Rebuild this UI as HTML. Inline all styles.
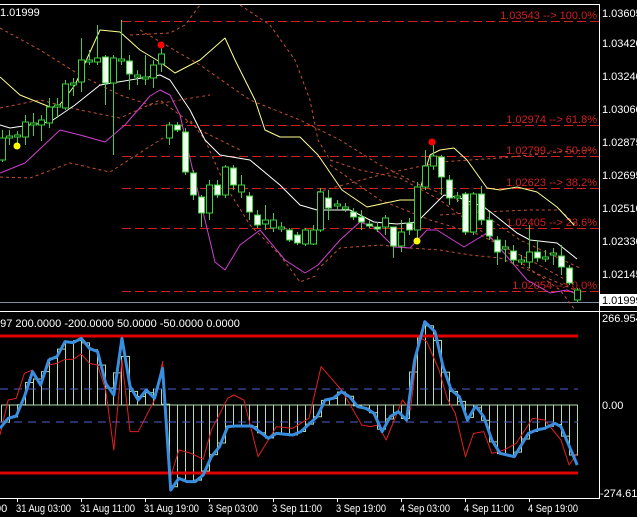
<!DOCTYPE html>
<html><head><meta charset="utf-8"><style>
html,body{margin:0;padding:0;background:#000;width:637px;height:517px;overflow:hidden}
svg{display:block}
text{font-family:"Liberation Sans",sans-serif;font-size:11px}
</style></head><body>
<svg id="s" width="637" height="517" viewBox="0 0 637 517" xmlns="http://www.w3.org/2000/svg">
<rect width="637" height="517" fill="#000"/>
<line x1="0" y1="4.5" x2="600" y2="4.5" stroke="#fff"/>
<line x1="599.5" y1="4" x2="599.5" y2="312" stroke="#fff"/>
<line x1="0" y1="302.5" x2="599" y2="302.5" stroke="#8090a0"/>
<line x1="0" y1="311.5" x2="637" y2="311.5" stroke="#fff"/>
<line x1="599.5" y1="312" x2="599.5" y2="499" stroke="#fff"/>
<line x1="0" y1="498.5" x2="600" y2="498.5" stroke="#fff"/>
<g id="fib" stroke="#d02020" stroke-dasharray="9,4" stroke-width="1"></g>
<g fill="#d02020" text-anchor="end" font-size="10">
<text x="597" y="19">1.03543 --&gt; 100.0%</text>
<text x="597" y="123">1.02974 --&gt; 61.8%</text>
<text x="597" y="154">1.02799 --&gt; 50.0%</text>
<text x="597" y="186">1.02623 --&gt; 38.2%</text>
<text x="597" y="226">1.02405 --&gt; 23.6%</text>
<text x="597" y="289">1.02054 --&gt; 0.0%</text>
</g>
<g id="dash" fill="none" stroke="#c05030" stroke-dasharray="3,3" stroke-width="1"></g>
<g id="lines" fill="none"></g>
<g id="candles"></g>
<circle cx="17" cy="146" r="3.5" fill="#ffff00"/>
<circle cx="417" cy="241" r="3.5" fill="#ffff00"/>
<circle cx="161" cy="45" r="3.5" fill="#ff0000"/>
<circle cx="432" cy="142" r="3.5" fill="#ff0000"/>
<text x="0" y="16" fill="#fff">1.01999</text>
<text x="-3" y="26" fill="#fff">)</text>
<g fill="#fff" font-size="10">
<text x="602" y="17">1.03605</text>
<text x="602" y="47">1.03420</text>
<text x="602" y="80">1.03240</text>
<text x="602" y="113">1.03060</text>
<text x="602" y="146">1.02875</text>
<text x="602" y="179">1.02695</text>
<text x="602" y="212">1.02510</text>
<text x="602" y="245">1.02330</text>
<text x="602" y="278">1.02145</text>
</g>
<rect x="600" y="294" width="37" height="12" fill="#fff"/>
<text x="602" y="304" fill="#000" font-size="10">1.01999</text>
<g id="hist" fill="none" stroke="#b0dcb0" stroke-width="1"></g>
<line x1="0" y1="336" x2="578" y2="336" stroke="#e00000" stroke-width="3"/>
<line x1="0" y1="473" x2="578" y2="473" stroke="#e00000" stroke-width="3"/>
<line x1="0" y1="389" x2="578" y2="389" stroke="#5060d0" stroke-dasharray="8,6"/>
<line x1="0" y1="422" x2="578" y2="422" stroke="#5060d0" stroke-dasharray="8,6"/>
<g id="ind" fill="none"></g>
<text x="-6" y="327" fill="#fff" font-size="10">597 200.0000 -200.0000 50.0000 -50.0000 0.0000</text>
<g fill="#fff" font-size="10">
<text x="602" y="322">266.954</text>
<text x="602" y="409">0.00</text>
<text x="600" y="497">-274.618</text>
</g>
<g fill="#fff" font-size="10" id="tl">
<text x="-5" y="512">00</text>
<text x="16" y="512" textLength="55" lengthAdjust="spacingAndGlyphs">31 Aug 03:00</text>
<text x="80" y="512" textLength="55" lengthAdjust="spacingAndGlyphs">31 Aug 11:00</text>
<text x="144" y="512" textLength="55" lengthAdjust="spacingAndGlyphs">31 Aug 19:00</text>
<text x="208" y="512" textLength="50" lengthAdjust="spacingAndGlyphs">3 Sep 03:00</text>
<text x="272" y="512" textLength="50" lengthAdjust="spacingAndGlyphs">3 Sep 11:00</text>
<text x="336" y="512" textLength="50" lengthAdjust="spacingAndGlyphs">3 Sep 19:00</text>
<text x="400" y="512" textLength="50" lengthAdjust="spacingAndGlyphs">4 Sep 03:00</text>
<text x="464" y="512" textLength="50" lengthAdjust="spacingAndGlyphs">4 Sep 11:00</text>
<text x="528" y="512" textLength="50" lengthAdjust="spacingAndGlyphs">4 Sep 19:00</text>
</g>
<g id="ticks" stroke="#fff"></g>
</svg>
<script>
var NS="http://www.w3.org/2000/svg";
function el(p,t,a){var e=document.createElementNS(NS,t);for(var k in a)e.setAttribute(k,a[k]);document.getElementById(p).appendChild(e);return e;}
[[21,122],[125,122],[156,122],[188,122],[228,122],[291,122]].forEach(function(f){el("fib","line",{x1:f[1],y1:f[0]+.5,x2:599,y2:f[0]+.5});});
function pl(p,pts,st,w){el(p,"polyline",{points:pts.map(function(q){return q.join(",")}).join(" "),stroke:st,"stroke-width":w||1,"stroke-linejoin":"round"});}
pl("dash",[[0,28],[40,50],[80,75],[120,95],[150,105],[180,100],[210,95]]);
pl("dash",[[130,35],[170,33],[185,25],[200,5]]);
pl("dash",[[240,5],[270,25],[295,60],[310,100],[318,140],[330,160],[360,170],[400,178],[440,200],[480,230],[520,262],[560,290],[575,310]]);
pl("dash",[[140,30],[200,65],[250,100],[300,120],[340,140],[380,165],[420,185],[470,205],[520,240],[580,268]]);
pl("dash",[[0,108],[40,100],[80,110],[120,118],[160,100],[200,130],[240,150]]);
pl("dash",[[0,177],[30,178],[70,163],[110,172],[160,140],[190,120],[205,140],[225,185],[250,225],[280,255],[300,282],[318,275]]);
pl("dash",[[317,270],[340,248],[380,245],[410,248],[440,250],[470,255],[500,258],[540,275],[575,290]]);
pl("dash",[[317,192],[380,175],[440,162],[500,158],[560,152],[590,150]]);
pl("dash",[[330,165],[380,200],[430,220],[480,235],[530,260],[575,285]]);
pl("dash",[[440,215],[480,212],[530,210],[560,210],[577,226]]);
pl("lines",[[0,77],[20,95],[50,107],[58,107],[75,85],[100,30],[120,32],[140,50],[160,62],[175,73],[200,60],[225,38],[235,60],[255,100],[265,130],[280,137],[300,137],[318,155],[342,190],[367,207],[400,200],[417,200],[430,155],[440,150],[454,148],[467,160],[487,188],[500,190],[517,187],[537,192],[557,207],[574,225]],"#ffff90");
pl("lines",[[0,125],[10,128],[50,122],[75,105],[100,85],[130,80],[160,75],[170,80],[190,110],[205,140],[220,155],[250,160],[280,185],[300,205],[317,210],[350,210],[374,222],[397,224],[417,222],[444,195],[457,197],[484,207],[497,217],[517,233],[530,240],[557,243],[577,259]],"#ffffff");
pl("lines",[[0,173],[25,163],[60,130],[80,135],[105,142],[125,125],[150,96],[160,90],[170,95],[180,115],[195,180],[205,220],[215,262],[225,270],[240,245],[260,230],[285,260],[305,273],[318,265],[340,240],[360,222],[374,227],[394,247],[410,248],[427,230],[437,230],[464,247],[487,233],[504,253],[527,280],[550,293],[567,290],[574,293]],"#d040d0");
var C=[[2,138,160,130,162,0],[9,136,138,130,145,0],[17,135,137,131,145,0],[25,122,137,115,145,0],[33,123,125,113,136,0],[41,120,125,115,141,0],[49,107,123,98,128,0],[57,105,107,98,118,0],[65,84,108,80,110,0],[73,83,85,78,96,0],[81,60,82,38,92,0],[89,60,62,50,65,0],[97,58,62,25,65,0],[105,57,83,55,105,1],[113,58,83,55,155,0],[121,59,61,20,65,0],[129,61,74,55,90,1],[137,75,77,70,85,0],[145,77,79,55,85,0],[153,65,78,60,88,0],[161,54,64,48,72,0],[169,125,138,122,145,0],[177,125,130,122,132,1],[185,132,172,128,175,1],[193,173,195,170,200,1],[201,197,213,195,227,1],[209,185,213,180,220,0],[217,185,195,180,198,1],[225,167,195,165,198,0],[233,168,185,165,190,1],[241,185,192,175,198,0],[249,196,212,192,220,1],[257,215,225,210,228,1],[265,220,224,205,230,0],[273,220,228,213,232,0],[281,227,229,222,232,0],[289,230,240,228,242,1],[297,235,243,232,245,1],[305,230,244,228,246,0],[313,230,244,225,245,0],[320,192,230,188,232,0],[328,198,208,190,220,1],[337,204,206,200,210,0],[345,207,209,203,212,0],[353,212,217,208,220,1],[361,217,222,210,230,1],[369,224,226,220,228,1],[377,227,229,222,232,1],[385,218,227,215,235,0],[393,227,246,228,258,1],[401,232,246,220,252,0],[409,223,230,218,235,1],[417,223,225,212,234,0],[417,187,230,182,238,0],[425,166,187,150,190,0],[433,156,166,143,170,0],[441,157,177,155,195,1],[449,180,198,175,205,1],[457,196,198,192,202,0],[465,194,232,192,235,1],[473,194,232,192,235,0],[481,194,220,186,225,1],[489,220,236,212,240,1],[497,240,252,236,265,1],[505,247,249,240,262,0],[513,251,260,245,265,1],[521,260,262,255,265,0],[529,252,262,225,268,0],[537,252,258,240,262,1],[545,257,259,250,262,0],[553,253,255,248,265,0],[561,256,267,245,275,1],[569,268,283,265,285,1],[577,290,300,288,302,0]];
C.forEach(function(c){el("candles","line",{x1:c[0]+.5,y1:c[3],x2:c[0]+.5,y2:c[4],stroke:"#40d040"});
el("candles","rect",{x:c[0]-2.5,y:c[1],width:6,height:Math.max(1,c[2]-c[1]),fill:c[5]?"#f0fff0":"#000",stroke:"#40d040"});});
function cv(a){return a.map(function(q){return [q[0]/2.46,q[1]/3+300]});}
var B=cv([[0,385],[20,355],[40,348],[60,290],[80,215],[100,255],[120,180],[140,170],[160,125],[180,128],[200,115],[220,145],[240,155],[260,250],[280,285],[300,115],[320,260],[340,300],[360,270],[380,295],[400,205],[420,570],[440,535],[460,545],[480,545],[500,525],[520,470],[540,440],[560,380],[580,378],[620,378],[660,415],[680,400],[720,405],[740,395],[780,350],[800,300],[820,295],[840,275],[860,290],[880,320],[900,325],[920,340],[940,395],[960,350],[980,335],[1000,360],[1020,180],[1045,65],[1070,95],[1090,200],[1110,270],[1130,290],[1150,360],[1170,318],[1190,350],[1210,420],[1230,460],[1265,470],[1300,400],[1320,390],[1340,385],[1365,370],[1380,380],[1420,495]]);
var R=cv([[0,405],[20,300],[40,295],[60,220],[80,210],[100,250],[120,195],[140,190],[160,178],[180,178],[200,162],[220,190],[240,195],[260,270],[280,450],[300,180],[320,395],[340,395],[380,300],[400,185],[420,530],[440,450],[470,460],[500,478],[520,390],[560,295],[575,285],[600,300],[635,470],[660,420],[680,380],[720,385],[760,355],[790,200],[840,270],[890,375],[910,380],[930,375],[950,420],[990,300],[1010,330],[1030,110],[1050,125],[1080,210],[1100,295],[1120,340],[1145,470],[1165,400],[1190,395],[1210,460],[1240,450],[1270,430],[1310,355],[1340,360],[1380,420],[1400,495],[1420,460]]);
function at(a,x){for(var i=1;i<a.length;i++){if(a[i][0]>=x){var p=a[i-1],q=a[i];return p[1]+(q[1]-p[1])*(x-p[0])/(q[0]-p[0]);}}return a[a.length-1][1];}
for(var x=1;x<570;x+=8){var y=at(B,x+4);var t=Math.min(y,405),h=Math.abs(y-405);el("hist","rect",{x:x+.5,y:t,width:8,height:h});}
pl("ind",R,"#e02020",1);
pl("ind",B,"#3a8ee0",3);
[17,81,145,209,273,337,401,465,529].forEach(function(x){el("ticks","line",{x1:x+.5,y1:498,x2:x+.5,y2:502});});
</script>
</body></html>
